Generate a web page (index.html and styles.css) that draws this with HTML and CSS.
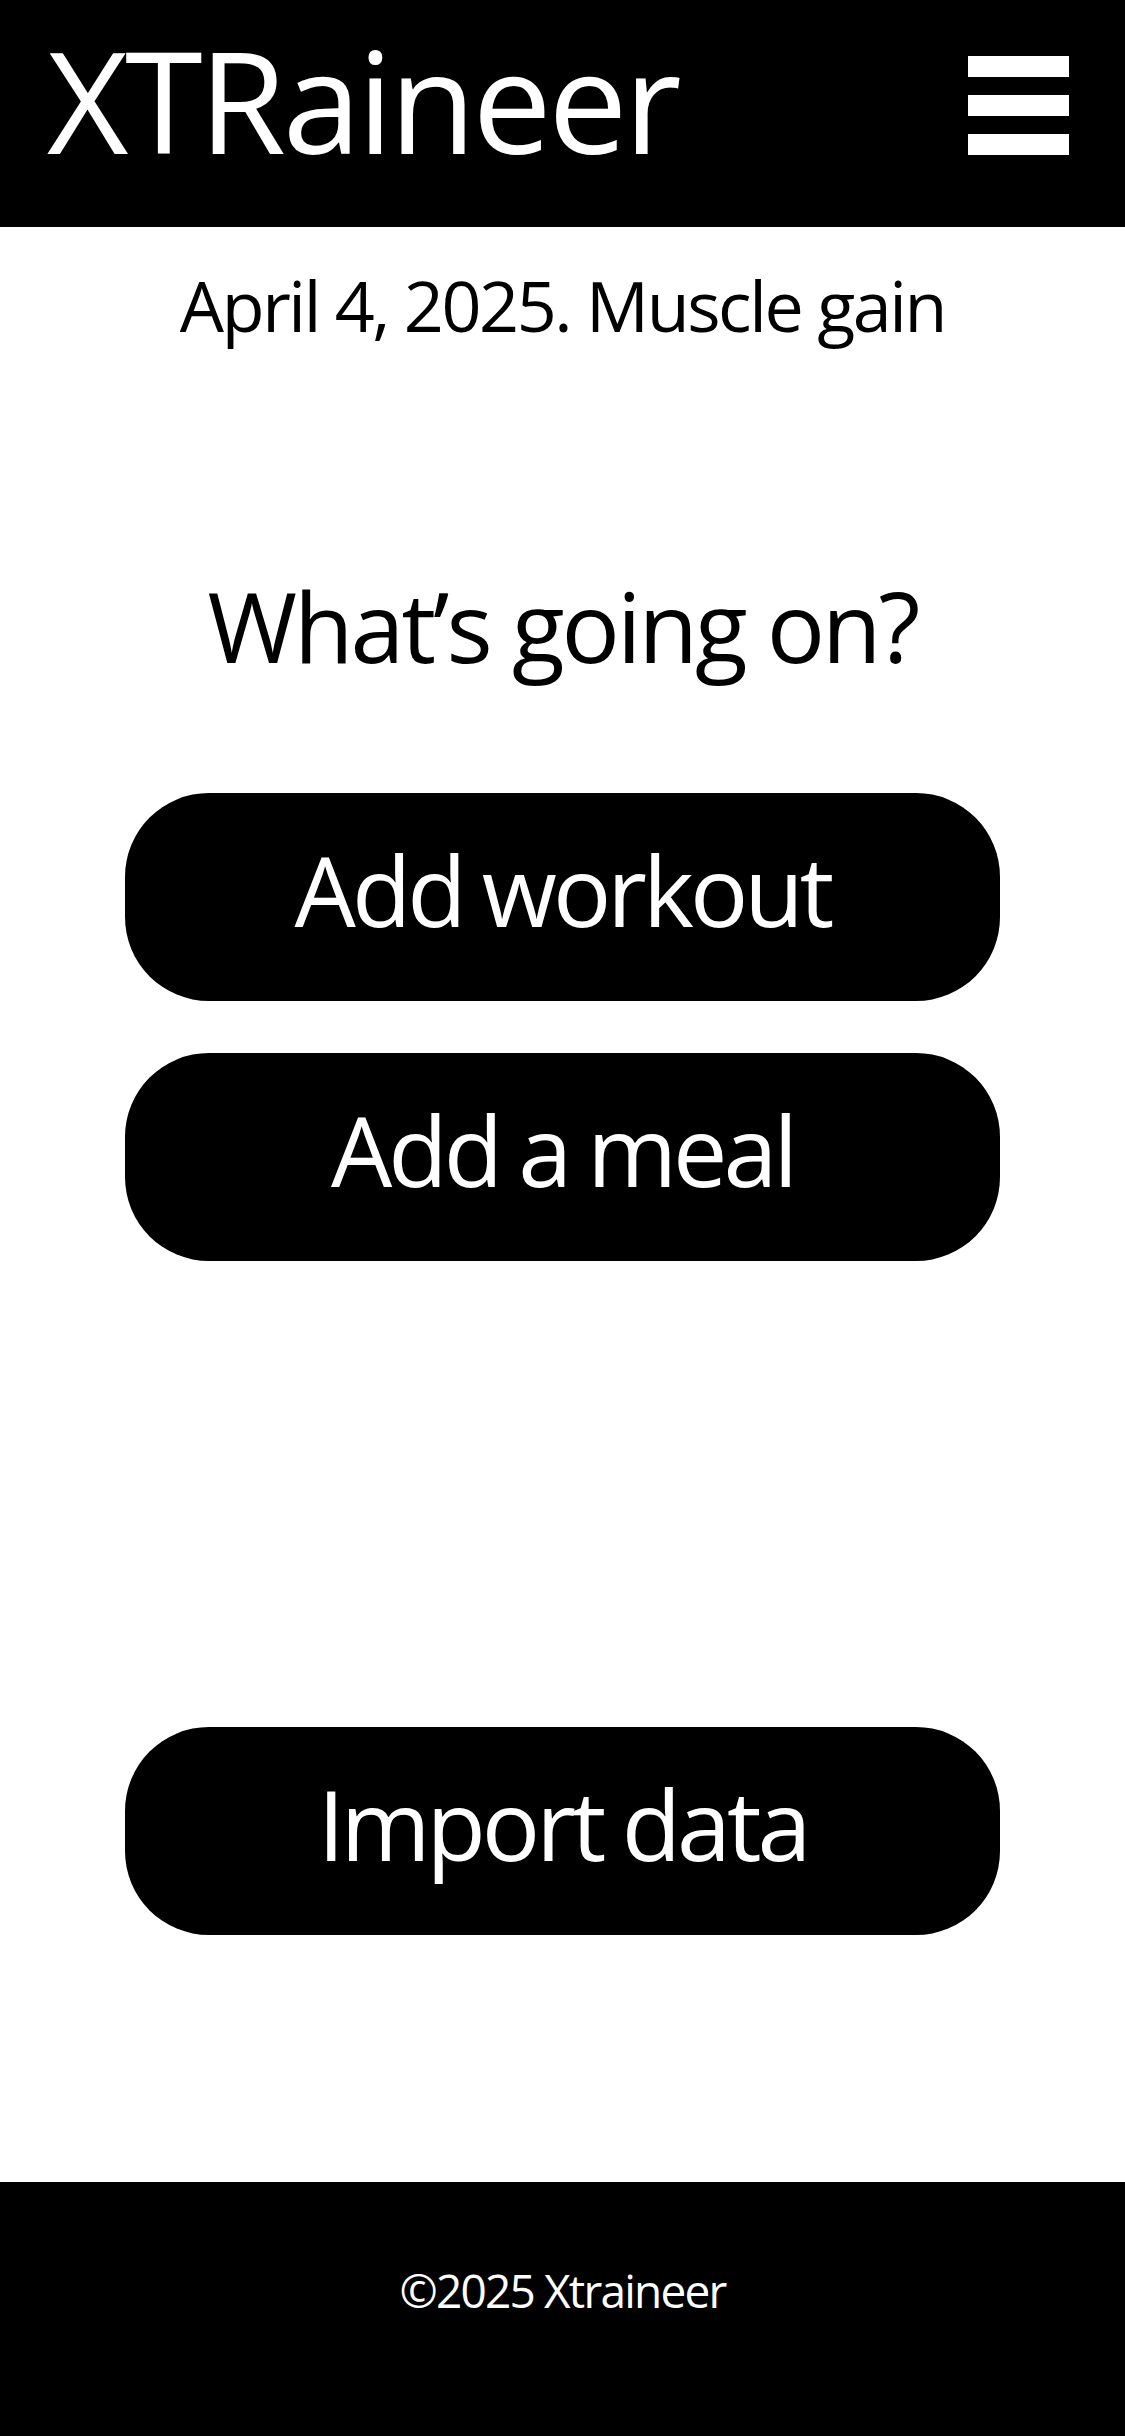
FILE: index.html
```html
<!DOCTYPE html>
<html lang="en">
<head>
<meta charset="utf-8">
<title>XTRaineer</title>
<link rel="stylesheet" href="styles.css">
</head>
<body>
<header class="header">
  <div class="brand">XTRaineer</div>
  <button class="menu" aria-label="Menu">
    <span class="bar"></span>
    <span class="bar"></span>
    <span class="bar"></span>
  </button>
</header>
<main class="main">
  <p class="date">April 4, 2025. Muscle gain</p>
  <h1 class="question">What’s going on?</h1>
  <div class="actions">
    <button class="pill">Add workout</button>
    <button class="pill">Add a meal</button>
  </div>
  <div class="import">
    <button class="pill">Import data</button>
  </div>
</main>
<footer class="footer">©2025 Xtraineer</footer>
</body>
</html>
```
FILE: styles.css
```css
* { box-sizing: border-box; }
html, body { margin: 0; padding: 0; }
body {
  font-family: "Open Sans", "Noto Sans", sans-serif;
  background: #fff;
  color: #000;
  min-height: 100vh;
  display: flex;
  flex-direction: column;
}
.header {
  background: #000;
  height: 227px;
  display: flex;
  align-items: flex-start;
  justify-content: space-between;
  padding: 0 56px 0 47px;
}
.brand {
  color: #fff;
  font-size: 141px;
  line-height: 1;
  margin-top: 29px;
  letter-spacing: -3.5px;
}
.menu {
  margin-top: 56px;
  width: 101px;
  display: flex;
  flex-direction: column;
  gap: 18px;
  padding: 0;
  border: 0;
  background: none;
}
.bar {
  display: block;
  width: 101px;
  height: 21px;
  background: #fff;
}
.main {
  flex: 1;
  display: flex;
  flex-direction: column;
  align-items: center;
}
.date {
  margin: 43px 0 0;
  font-size: 70px;
  line-height: 1;
  letter-spacing: -2.4px;
}
.question {
  margin: 237px 0 0;
  font-size: 97px;
  font-weight: 400;
  line-height: 1;
  letter-spacing: -3px;
}
.actions {
  margin-top: 119px;
  display: flex;
  flex-direction: column;
  gap: 52px;
}
.import {
  margin-top: 466px;
}
.pill {
  width: 875px;
  height: 208px;
  border: 0;
  border-radius: 84px;
  background: #000;
  color: #fff;
  font-family: "Open Sans", "Noto Sans", sans-serif;
  font-size: 97px;
  line-height: 1;
  letter-spacing: -4px;
  word-spacing: -2px;
  padding: 0 0 16px;
  display: flex;
  align-items: center;
  justify-content: center;
}
.footer {
  background: #000;
  color: #fff;
  height: 254px;
  padding-top: 85px;
  text-align: center;
  font-size: 46px;
  line-height: 1;
  letter-spacing: -1.8px;
}
```
